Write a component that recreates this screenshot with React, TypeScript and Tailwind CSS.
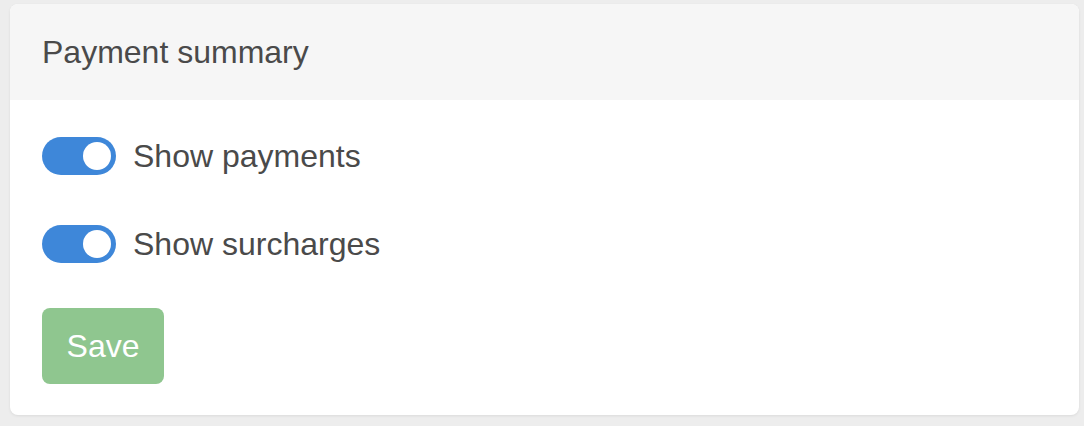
import { useState } from "react";

function Toggle({ label, defaultOn = true }: { label: string; defaultOn?: boolean }) {
  const [on, setOn] = useState(defaultOn);

  return (
    <label className="flex h-[38px] cursor-pointer items-center gap-[17px]">
      <button
        type="button"
        onClick={() => setOn(!on)}
        className={`relative h-[38px] w-[74px] shrink-0 rounded-full ${on ? "bg-[#3e87d9]" : "bg-[#b5b5b5]"}`}
      >
        <span
          className={`absolute top-[5px] h-[28px] w-[28px] rounded-full bg-white ${on ? "left-[41px]" : "left-[5px]"}`}
        />
      </button>
      <span className="text-[32px] leading-none text-[#4a4a4a]">{label}</span>
    </label>
  );
}

export default function App() {
  return (
    <div className="min-h-[426px] w-full bg-[#ededed] pl-[10px] pr-[5px] pt-[4px] font-['Liberation_Sans',Arial,sans-serif]">
      <div className="w-[1069px] overflow-hidden rounded-[8px] bg-white shadow-[0_1px_3px_rgba(0,0,0,0.08)]">
        <div className="flex h-[96px] items-center bg-[#f6f6f6] px-[32px]">
          <h2 className="text-[32px] leading-none text-[#4a4a4a]">Payment summary</h2>
        </div>

        <div className="flex flex-col items-start px-[32px] pb-[31px] pt-[37px]">
          <div className="flex flex-col gap-[50px]">
            <Toggle label="Show payments" />
            <Toggle label="Show surcharges" />
          </div>

          <button
            type="button"
            disabled
            className="mt-[45px] flex h-[76px] w-[122px] items-center justify-center rounded-[8px] bg-[#8fc68f] text-[32px] leading-none text-white"
          >
            Save
          </button>
        </div>
      </div>
    </div>
  );
}
